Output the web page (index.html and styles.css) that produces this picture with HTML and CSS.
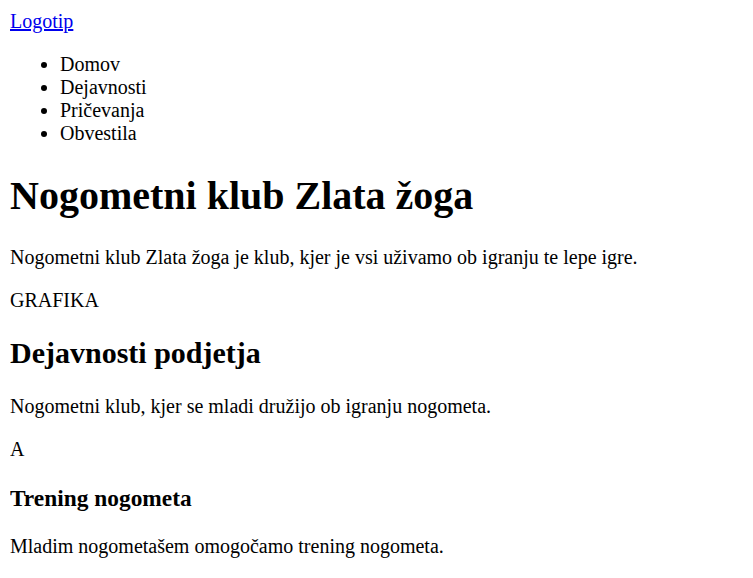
FILE: index.html
```html
<!DOCTYPE html>
<html lang="sl">
<head>
<meta charset="utf-8">
<title>Nogometni klub Zlata žoga</title>
<link rel="stylesheet" href="styles.css">
</head>
<body>
<header class="site-header">
  <a class="logo" href="#">Logotip</a>
  <ul class="nav">
    <li>Domov</li>
    <li>Dejavnosti</li>
    <li>Pričevanja</li>
    <li>Obvestila</li>
  </ul>
</header>
<main>
  <h1 class="title">Nogometni klub Zlata žoga</h1>
  <p class="text">Nogometni klub Zlata žoga je klub, kjer je vsi uživamo ob igranju te lepe igre.</p>
  <p class="text">GRAFIKA</p>
  <h2 class="subtitle">Dejavnosti podjetja</h2>
  <p class="text">Nogometni klub, kjer se mladi družijo ob igranju nogometa.</p>
  <p class="text">A</p>
  <h3 class="subsub">Trening nogometa</h3>
  <p class="text">Mladim nogometašem omogočamo trening nogometa.</p>
</main>
</body>
</html>
```
FILE: styles.css
```css
html {
  font-size: 20px;
}
body {
  margin: 10px;
  font-family: "Liberation Serif", "Times New Roman", serif;
  font-size: 20px;
  color: #000;
  background: #fff;
}
.logo {
  color: #0000ee;
  text-decoration: underline;
}
.nav {
  margin: 1em 0;
  padding-left: 50px;
  list-style: disc;
}
.title {
  font-size: 2em;
  margin: 0.67em 0;
  font-weight: bold;
}
.subtitle {
  font-size: 1.5em;
  margin: 0.83em 0;
  font-weight: bold;
}
.subsub {
  font-size: 1.17em;
  margin: 1em 0;
  font-weight: bold;
}
.text {
  margin: 1em 0;
}
```
